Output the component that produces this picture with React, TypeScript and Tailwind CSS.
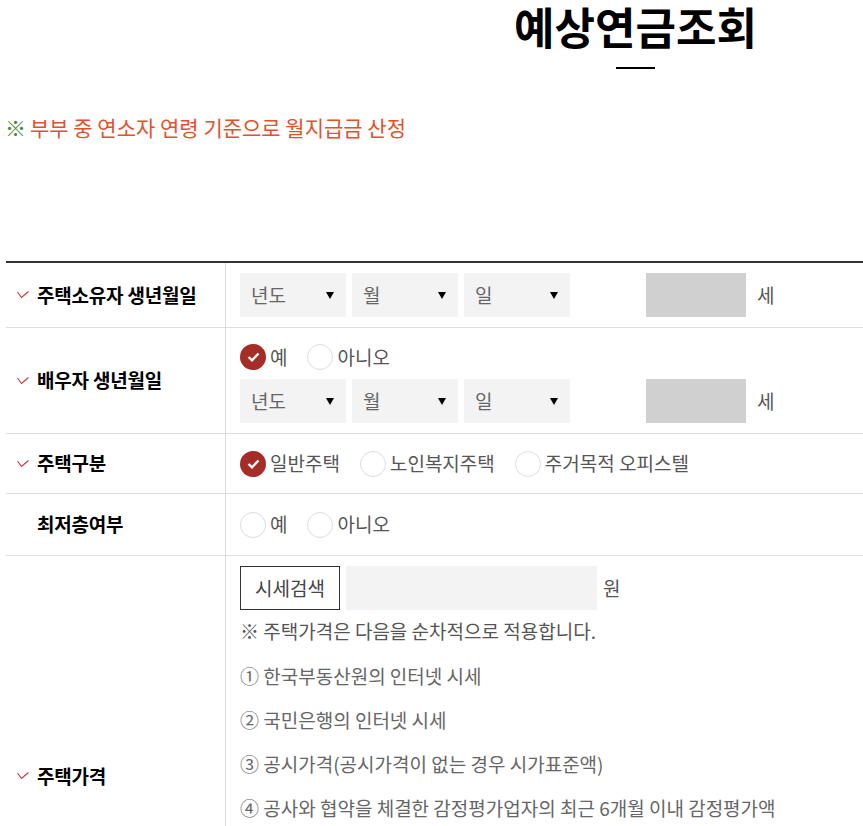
import React from "react";

const font = { fontFamily: '"Noto Sans CJK KR", "Noto Sans", sans-serif' };

function Tick() {
  return (
    <svg width="12" height="8" viewBox="0 0 12 8" className="mr-[8px] shrink-0">
      <path d="M0.5 1 L4.5 6.5 L11.5 0.5" fill="none" stroke="#c8373a" strokeWidth="1.1" />
    </svg>
  );
}

function Select({ label }: { label: string }) {
  return (
    <div className="flex h-[44px] w-[106px] items-center justify-between bg-[#f3f3f3] pl-[11px] pr-[12px] text-[19px] text-[#666]">
      <span>{label}</span>
      <span className="h-0 w-0 border-l-[4px] border-r-[4px] border-t-[7px] border-l-transparent border-r-transparent border-t-black" />
    </div>
  );
}

function DateRow() {
  return (
    <div className="flex items-center gap-[6px]">
      <Select label="년도" />
      <Select label="월" />
      <Select label="일" />
      <div className="ml-[70px] h-[44px] w-[100px] bg-[#d0d0d0]" />
      <span className="ml-[5px] text-[19px] text-[#555]">세</span>
    </div>
  );
}

function Radio({ label, checked, gap }: { label: string; checked?: boolean; gap?: string }) {
  return (
    <div className={`flex items-center ${gap ?? ""}`}>
      {checked ? (
        <span className="flex h-[26px] w-[26px] items-center justify-center rounded-full bg-[#a52d27]">
          <svg width="13" height="10" viewBox="0 0 13 10">
            <path d="M1.5 5 L5 8.3 L11.5 1.5" fill="none" stroke="#fff" strokeWidth="2.4" />
          </svg>
        </span>
      ) : (
        <span className="h-[26px] w-[26px] rounded-full border border-[#dcdcdc] bg-white" />
      )}
      <span className="ml-[4px] text-[19px] text-[#555]">{label}</span>
    </div>
  );
}

function Row({
  label,
  required = true,
  children,
  className = "",
}: {
  label: string;
  required?: boolean;
  children: React.ReactNode;
  className?: string;
}) {
  return (
    <div className="flex border-b border-[#ddd]">
      <div className="flex w-[220px] shrink-0 items-center border-r border-[#ddd] pl-[11px]">
        {required ? <Tick /> : <span className="w-[20px]" />}
        <span className="text-[19px] font-bold tracking-[-0.2px] text-black">{label}</span>
      </div>
      <div className={`flex-1 pl-[14px] ${className}`}>{children}</div>
    </div>
  );
}

export default function App() {
  const items = [
    "① 한국부동산원의 인터넷 시세",
    "② 국민은행의 인터넷 시세",
    "③ 공시가격(공시가격이 없는 경우 시가표준액)",
    "④ 공사와 협약을 체결한 감정평가업자의 최근 6개월 이내 감정평가액",
  ];
  return (
    <div className="min-h-screen overflow-hidden bg-white" style={font}>
      <div className="flex flex-col items-center pl-[408px]">
        <h1 className="text-[44px] font-bold leading-[52px] text-black">예상연금조회</h1>
        <div className="mt-[15px] h-[2px] w-[39px] bg-black" />
      </div>

      <p className="mt-[44px] pl-[5px] text-[21px] leading-[28px] text-[#e1522b]">
        <span className="text-[#4a8a3a]">※</span>
        <span className="ml-[4px]">부부 중 연소자 연령 기준으로 월지급금 산정</span>
      </p>

      <div className="ml-[6px] mt-[120px] border-t-2 border-[#333]">
        <Row label="주택소유자 생년월일" className="py-[10px]">
          <DateRow />
        </Row>
        <Row label="배우자 생년월일" className="pb-[10px] pt-[10px]">
          <div className="flex h-[38px] items-center">
            <Radio label="예" checked />
            <Radio label="아니오" gap="ml-[20px]" />
          </div>
          <div className="mt-[3px]">
            <DateRow />
          </div>
        </Row>
        <Row label="주택구분" className="py-[10px]">
          <div className="flex h-[39px] items-center">
            <Radio label="일반주택" checked />
            <Radio label="노인복지주택" gap="ml-[20px]" />
            <Radio label="주거목적 오피스텔" gap="ml-[20px]" />
          </div>
        </Row>
        <Row label="최저층여부" required={false} className="py-[10px]">
          <div className="flex h-[41px] items-center">
            <Radio label="예" />
            <Radio label="아니오" gap="ml-[20px]" />
          </div>
        </Row>
        <Row label="주택가격" className="min-h-[440px] pt-[10px]">
          <div className="flex items-center">
            <div className="flex h-[44px] w-[100px] items-center justify-center border border-[#333] text-[19px] text-[#444]">
              시세검색
            </div>
            <div className="ml-[6px] h-[44px] w-[251px] bg-[#f3f3f3]" />
            <span className="ml-[6px] text-[19px] text-[#555]">원</span>
          </div>
          <p className="mt-[8px] text-[19px] leading-[26px] text-[#555]">
            ※ 주택가격은 다음을 순차적으로 적용합니다.
          </p>
          <ul className="mt-[19px] flex flex-col gap-[18px]">
            {items.map((t, i) => (
              <li key={i} className="text-[19px] leading-[26px] text-[#666]">
                {t}
              </li>
            ))}
          </ul>
        </Row>
      </div>
    </div>
  );
}
